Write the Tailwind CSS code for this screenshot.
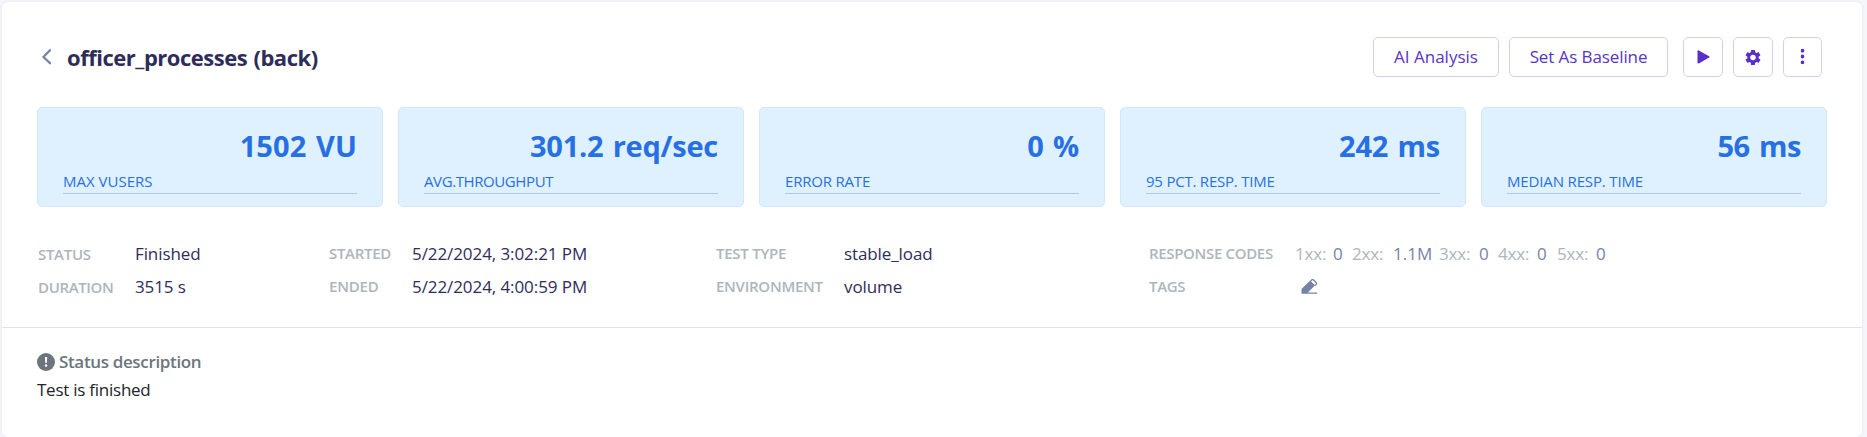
<!DOCTYPE html>
<html lang="en">
<head>
<meta charset="utf-8">
<title>officer_processes</title>
<script src="https://cdn.jsdelivr.net/npm/@tailwindcss/browser@4"></script>
</head>
<body class="h-[437px] overflow-hidden bg-[#f5f6fc] font-['Open_Sans',sans-serif] text-[17px]">
<main class="mt-[2px] mr-[5px] ml-[2px] h-[435px] rounded-md bg-white shadow-[0_0_3px_rgba(60,60,120,0.10)]">
  <header class="flex h-[105px] items-center pt-[5px] pl-[35px]">
    <div class="flex h-10 w-full items-center">
      <svg class="ml-[4px] h-[18px] w-[12px]" viewBox="0 0 12 18" fill="none" stroke="#7783a4" stroke-width="2.3" stroke-linecap="round" stroke-linejoin="round"><path d="M9 2.2 2.4 9 9 15.2"/></svg>
      <h1 class="ml-[14px] whitespace-nowrap text-[22px] leading-10 font-bold tracking-[-0.48px] [word-spacing:1px] text-[#2e2d59]">officer_processes (back)</h1>
      <div class="mr-[40px] ml-auto flex h-10 font-medium text-[#5a33c6]">
        <button class="w-[126px] rounded-[5px] border border-[#d5cdf1] whitespace-nowrap">AI Analysis</button>
        <button class="ml-[10px] w-[159px] rounded-[5px] border border-[#d5cdf1] whitespace-nowrap tracking-[-0.1px]">Set As Baseline</button>
        <button class="ml-[15px] flex w-10 items-center justify-center rounded-[5px] border border-[#d5cdf1]">
          <svg class="h-[14px] w-[13px]" viewBox="0 0 13 14" fill="#5a2ecb"><path d="M.5 1.2C.5.4 1.2.2 1.8.5l10.3 5.7c.6.4.6 1 0 1.4L1.8 13.4c-.6.3-1.3 0-1.3-.7z"/></svg>
        </button>
        <button class="ml-[10px] flex w-10 items-center justify-center rounded-[5px] border border-[#d5cdf1]">
          <svg class="h-[19px] w-[19px] -translate-x-[0.5px]" viewBox="0 0 24 24" fill="#5a2ecb"><path d="M19.14 12.94c.04-.3.06-.61.06-.94 0-.32-.02-.64-.07-.94l2.03-1.58c.18-.14.23-.41.12-.61l-1.92-3.32c-.12-.22-.37-.29-.59-.22l-2.39.96c-.5-.38-1.03-.7-1.62-.94l-.36-2.54c-.04-.24-.24-.41-.48-.41h-3.84c-.24 0-.43.17-.47.41l-.36 2.54c-.59.24-1.13.57-1.62.94l-2.39-.96c-.22-.08-.47 0-.59.22L2.74 8.87c-.12.21-.08.47.12.61l2.03 1.58c-.05.3-.09.63-.09.94s.02.64.07.94l-2.03 1.58c-.18.14-.23.41-.12.61l1.92 3.32c.12.22.37.29.59.22l2.39-.96c.5.38 1.03.7 1.62.94l.36 2.54c.05.24.24.41.48.41h3.84c.24 0 .44-.17.47-.41l.36-2.54c.59-.24 1.13-.56 1.62-.94l2.39.96c.22.08.47 0 .59-.22l1.92-3.32c.12-.22.07-.47-.12-.61zM12 15.6c-1.98 0-3.6-1.62-3.6-3.6s1.62-3.6 3.6-3.6 3.6 1.62 3.6 3.6-1.62 3.6-3.6 3.6z"/></svg>
        </button>
        <button class="ml-[10px] flex w-[39px] items-center justify-center rounded-[5px] border border-[#d5cdf1]">
          <svg class="h-[16px] w-[4px] -translate-x-[0.5px] -translate-y-[0.5px]" viewBox="0 0 4 16" fill="#5a2ecb"><circle cx="2" cy="2.2" r="1.9"/><circle cx="2" cy="8" r="1.9"/><circle cx="2" cy="13.8" r="1.9"/></svg>
        </button>
      </div>
    </div>
  </header>

  <section class="flex gap-[15px] px-[35px] text-[#2770e4]">
    <div class="h-[100px] flex-1 rounded-[5px] border border-[#d0e7fd] bg-[#dff1fe] px-[25px] pt-[20px]">
      <div class="h-9 text-right text-[29px] leading-9 font-bold tracking-[0.1px] [word-spacing:2px]">1502 VU</div>
      <div class="mt-[5px] h-[25px] border-b border-[#aec6f3] text-[15px] leading-6 font-[370]">MAX VUSERS</div>
    </div>
    <div class="h-[100px] flex-1 rounded-[5px] border border-[#d0e7fd] bg-[#dff1fe] px-[25px] pt-[20px]">
      <div class="h-9 text-right text-[29px] leading-9 font-bold tracking-[-0.25px] [word-spacing:2px]">301.2 req/sec</div>
      <div class="mt-[5px] h-[25px] border-b border-[#aec6f3] text-[15px] leading-6 font-[370] tracking-[-0.4px]">AVG.THROUGHPUT</div>
    </div>
    <div class="h-[100px] flex-1 rounded-[5px] border border-[#d0e7fd] bg-[#dff1fe] px-[25px] pt-[20px]">
      <div class="h-9 text-right text-[29px] leading-9 font-bold tracking-[-0.2px] [word-spacing:2px]">0 %</div>
      <div class="mt-[5px] h-[25px] border-b border-[#aec6f3] text-[15px] leading-6 font-[370] tracking-[-0.2px]">ERROR RATE</div>
    </div>
    <div class="h-[100px] flex-1 rounded-[5px] border border-[#d0e7fd] bg-[#dff1fe] px-[25px] pt-[20px]">
      <div class="h-9 text-right text-[29px] leading-9 font-bold tracking-[-0.2px] [word-spacing:2px]">242 ms</div>
      <div class="mt-[5px] h-[25px] border-b border-[#aec6f3] text-[15px] leading-6 font-[370] tracking-[-0.22px]">95 PCT. RESP. TIME</div>
    </div>
    <div class="h-[100px] flex-1 rounded-[5px] border border-[#d0e7fd] bg-[#dff1fe] px-[25px] pt-[20px]">
      <div class="h-9 text-right text-[29px] leading-9 font-bold tracking-[-0.4px] [word-spacing:2px]">56 ms</div>
      <div class="mt-[5px] h-[25px] border-b border-[#aec6f3] text-[15px] leading-6 font-[370] tracking-[-0.15px]">MEDIAN RESP. TIME</div>
    </div>
  </section>

  <section class="mt-[30px] flex h-[66px] pl-[36px] leading-[33px] font-[370] whitespace-nowrap text-[#2e2d59]">
    <div class="grid w-[291px] grid-cols-[97px_1fr] grid-rows-[33px_33px]">
      <div class="pt-px text-[15px] font-semibold tracking-[-0.3px] text-[#adb5bd]">STATUS</div><div class="tracking-[-0.1px]">Finished</div>
      <div class="pt-px text-[15px] font-semibold tracking-[-0.35px] text-[#adb5bd]">DURATION</div><div class="tracking-[-0.1px]">3515 s</div>
    </div>
    <div class="grid w-[387px] grid-cols-[83px_1fr] grid-rows-[33px_33px]">
      <div class="text-[15px] font-semibold tracking-[-0.3px] text-[#adb5bd]">STARTED</div><div class="tracking-[-0.08px]">5/22/2024, 3:02:21 PM</div>
      <div class="text-[15px] font-semibold tracking-[-0.2px] text-[#adb5bd]">ENDED</div><div class="tracking-[-0.08px]">5/22/2024, 4:00:59 PM</div>
    </div>
    <div class="grid w-[433px] grid-cols-[128px_1fr] grid-rows-[33px_33px]">
      <div class="text-[15px] font-semibold tracking-[-0.25px] text-[#adb5bd]">TEST TYPE</div><div class="tracking-[-0.1px]">stable_load</div>
      <div class="text-[15px] font-semibold tracking-[-0.25px] text-[#adb5bd]">ENVIRONMENT</div><div class="tracking-[-0.1px]">volume</div>
    </div>
    <div class="grid grid-cols-[146px_1fr] grid-rows-[33px_33px]">
      <div class="text-[15px] font-semibold tracking-[-0.33px] text-[#adb5bd]">RESPONSE CODES</div>
      <div class="flex tracking-[-0.2px] text-[#7783a4]">
        <span class="w-[38px] text-[#adb5bd]">1xx:</span><span class="w-[19px]">0</span>
        <span class="w-[41px] text-[#adb5bd]">2xx:</span><span class="w-[46px] tracking-normal">1.1M</span>
        <span class="w-[40px] text-[#adb5bd]">3xx:</span><span class="w-[19px]">0</span>
        <span class="w-[39px] text-[#adb5bd]">4xx:</span><span class="w-[20px]">0</span>
        <span class="w-[39px] text-[#adb5bd]">5xx:</span><span>0</span>
      </div>
      <div class="text-[15px] font-semibold tracking-[-0.3px] text-[#adb5bd]">TAGS</div>
      <div class="flex items-center pl-[6px]">
        <svg class="h-[16px] w-[17px] -translate-y-[0.5px]" viewBox="0 0 17 16"><path fill="#7783a4" d="M.5 15.2V10.4L9.2 1.9l4.9 4.9-7.2 7.2h9.3v1.2z"/><path fill="#fff" d="m10.2 2.7 1.3-1.2 3.2 3.2-1.3 1.2z"/><path fill="none" stroke="#7783a4" stroke-width="1.3" stroke-linejoin="round" d="m9.6 2.6 1.3-1.3q.7-.6 1.4 0l3 3q.6.7 0 1.4L14 7"/></svg>
      </div>
    </div>
  </section>

  <section class="mt-[24px] border-t border-[#e1e3e6] pt-[20px] pl-[35px] leading-7">
    <div class="flex h-7 items-center font-semibold tracking-[-0.35px] text-[#6c757d]">
      <svg class="mr-[4px] h-[18px] w-[18px]" viewBox="0 0 18 18"><circle cx="9" cy="9" r="9" fill="#6c757d"/><path d="M7.9 4h2.3l-.4 6H8.3z" fill="#fff"/><circle cx="9.05" cy="12.6" r="1.25" fill="#fff"/></svg>
      <span>Status description</span>
    </div>
    <div class="font-[370] tracking-[-0.25px] text-[#212529]">Test is finished</div>
  </section>
</main>
</body>
</html>
